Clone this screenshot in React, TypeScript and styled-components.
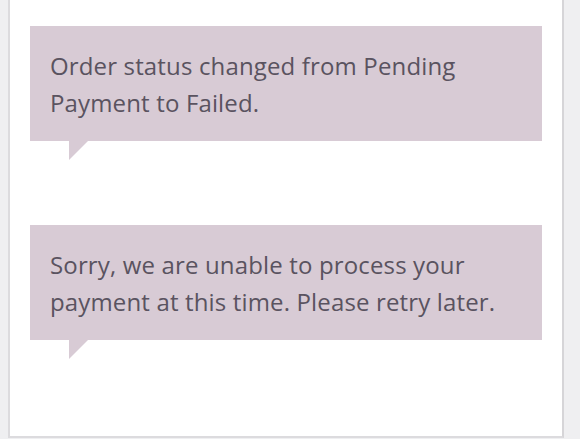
import React from "react";
import styled, { createGlobalStyle } from "styled-components";

const Global = createGlobalStyle`
  html, body { margin: 0; padding: 0; }
  body {
    background: #efeff1;
    font-family: "Open Sans", "Noto Sans", sans-serif;
    overflow: hidden;
  }
`;

const Page = styled.div`
  width: 580px;
  height: 439px;
  background: #efeff1;
  display: flex;
  align-items: flex-start;
  padding-left: 8px;
  box-sizing: border-box;
`;

const Panel = styled.div`
  width: 556px;
  height: 438px;
  box-sizing: border-box;
  background: #ffffff;
  border-left: 2px solid #dcdbde;
  border-right: 2px solid #d6d5d8;
  border-bottom: 2px solid #dcdbde;
  padding: 26px 20px 0 20px;
  display: flex;
  flex-direction: column;
  gap: 84px;
`;

const Note = styled.div`
  position: relative;
  background: #d8cbd5;
  color: #5a5360;
  font-size: 24px;
  line-height: 37px;
  padding: 21px 20px 20px 20px;
  letter-spacing: 0.15px;

  &::after {
    content: "";
    position: absolute;
    left: 39px;
    top: 100%;
    width: 0;
    height: 0;
    border-top: 19px solid #d8cbd5;
    border-right: 19px solid transparent;
  }
`;

const notes = [
  "Order status changed from Pending Payment to Failed.",
  "Sorry, we are unable to process your payment at this time. Please retry later.",
];

export default function App() {
  return (
    <>
      <Global />
      <Page>
        <Panel>
          {notes.map((n) => (
            <Note key={n}>{n}</Note>
          ))}
        </Panel>
      </Page>
    </>
  );
}
